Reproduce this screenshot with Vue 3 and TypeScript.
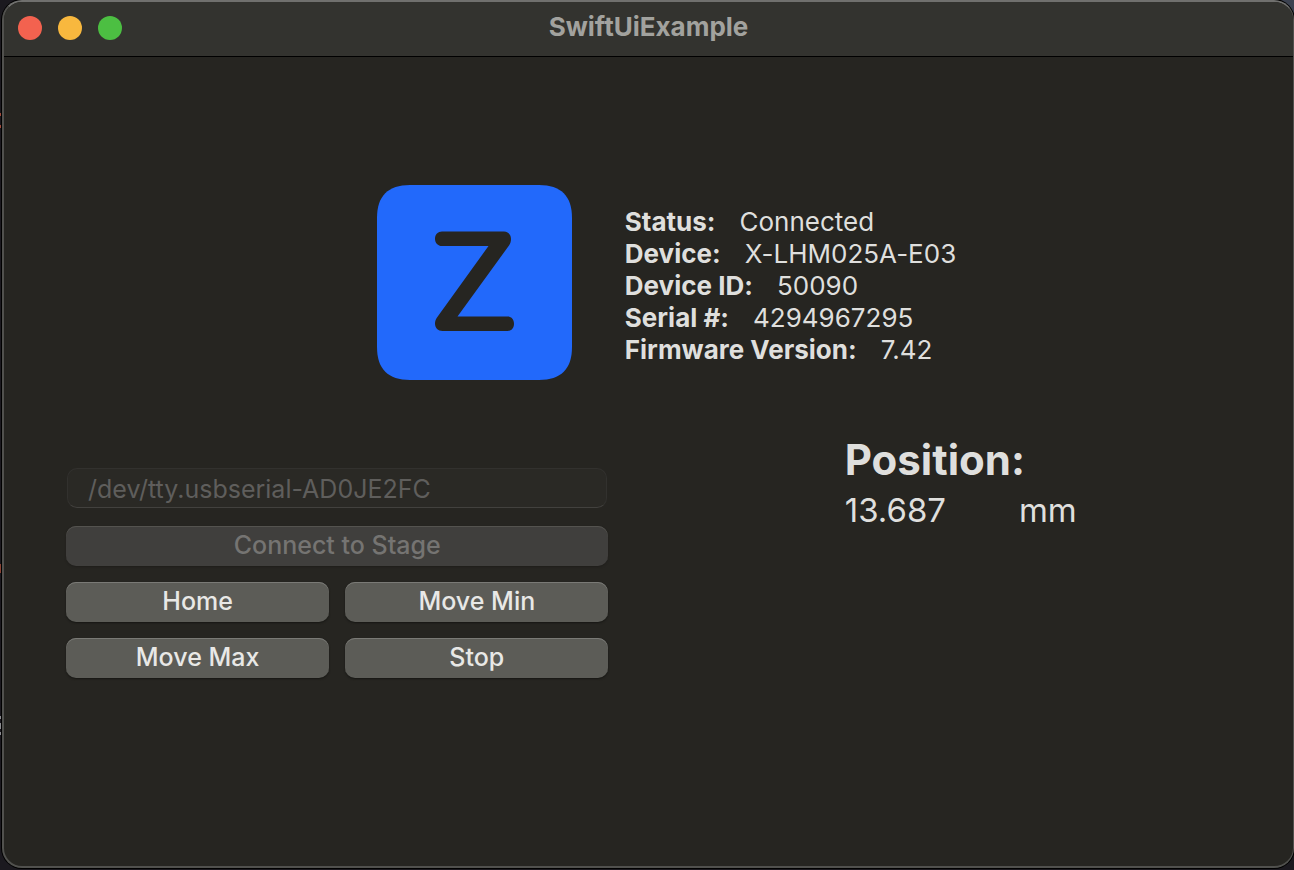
<script setup lang="ts">
import { ref } from 'vue'

interface Detail {
  label: string
  value: string
}

const title = 'SwiftUiExample'
const port = ref('/dev/tty.usbserial-AD0JE2FC')
const position = ref('13.687')
const connected = ref(true)

const details: Detail[] = [
  { label: 'Status:', value: 'Connected' },
  { label: 'Device:', value: 'X-LHM025A-E03' },
  { label: 'Device ID:', value: '50090' },
  { label: 'Serial #:', value: '4294967295' },
  { label: 'Firmware Version:', value: '7.42' },
]

const commands: string[] = ['Home', 'Move Min', 'Move Max', 'Stop']
</script>

<template>
  <div class="desktop">
    <div class="window">
      <header class="titlebar">
        <div class="lights">
          <button class="light close" type="button" aria-label="Close"></button>
          <button class="light minimize" type="button" aria-label="Minimize"></button>
          <button class="light expand" type="button" aria-label="Zoom"></button>
        </div>
        <h1 class="title">{{ title }}</h1>
      </header>

      <main class="content">
        <section class="summary">
          <svg class="logo" viewBox="0 0 195 195" aria-hidden="true">
            <path
              fill="#2269fb"
              d="M33 0H162C184 0 195 11 195 33V162C195 184 184 195 162 195H33C11 195 0 184 0 162V33C0 11 11 0 33 0Z"
            />
            <path
              fill="#262521"
              d="M65 46.5H127C131 46.5 134 49.5 134 54C134 56.5 133.4 58.5 132 60.5L80.5 131.5H130.5C134.5 131.5 137 134.5 137 138.7C137 143 134.5 146 130.5 146H65.5C61 146 58 143 58 138.5C58 136.5 58.6 134.5 60 132.5L111.5 61H65C61 61 58 58 58 53.7C58 49.5 61 46.5 65 46.5Z"
            />
          </svg>
          <dl class="details">
            <div v-for="item in details" :key="item.label" class="detail">
              <dt>{{ item.label }}</dt>
              <dd>{{ item.value }}</dd>
            </div>
          </dl>
        </section>

        <section class="stage">
          <form class="controls" @submit.prevent>
            <input v-model="port" class="port" type="text" aria-label="Serial port" :disabled="connected" />
            <button class="push connect" type="button" :disabled="connected">Connect to Stage</button>
            <button v-for="name in commands" :key="name" class="push" type="button">{{ name }}</button>
          </form>
          <div class="position">
            <h2>Position:</h2>
            <p class="reading">
              <span>{{ position }}</span>
              <span>mm</span>
            </p>
          </div>
        </section>
      </main>
    </div>
  </div>
</template>

<style>
html,
body {
  margin: 0;
  background: #08080a;
}
</style>

<style scoped>
.desktop {
  box-sizing: border-box;
  min-height: 100vh;
  padding: 0 0 2px 2px;
  display: flex;
  background:
    linear-gradient(#a04a3a, #a04a3a) 0 113px / 1px 3px no-repeat,
    linear-gradient(#a04a3a, #a04a3a) 0 125px / 1px 3px no-repeat,
    linear-gradient(#8a4334, #8a4334) 0 564px / 1px 9px no-repeat,
    linear-gradient(#8c8c90, #8c8c90) 0 716px / 1px 3px no-repeat,
    linear-gradient(#8c8c90, #8c8c90) 0 723px / 1px 6px no-repeat,
    linear-gradient(#8c8c90, #8c8c90) 0 732px / 1px 3px no-repeat,
    linear-gradient(#3c4250, #3c4250) 100% 0 / 20px 20px no-repeat,
    #1b191f;
  font-family: Inter, 'Liberation Sans', sans-serif;
  font-feature-settings: 'calt' 0;
  color: #dfdfdd;
}

.window {
  box-sizing: border-box;
  flex: 1;
  display: flex;
  flex-direction: column;
  border: 2px solid #51514e;
  border-top-color: #70706e;
  border-right-width: 1px;
  border-radius: 20px;
  overflow: hidden;
  background: #262521;
  box-shadow: 0 0 0 1px #000;
}

.titlebar {
  display: grid;
  grid-template-columns: 1fr auto 1fr;
  align-items: center;
  height: 55px;
  box-sizing: border-box;
  padding: 0 14px 4px;
  border-bottom: 1px solid #000;
  background: #33332f;
}

.lights {
  display: flex;
  gap: 16px;
  padding-top: 2px;
}

.light {
  width: 24px;
  height: 24px;
  padding: 0;
  border: 0;
  border-radius: 50%;
}

.close {
  background: #f3624f;
}

.minimize {
  background: #f8b83e;
}

.expand {
  background: #4cbf42;
}

.title {
  margin: 0;
  font-size: 26px;
  line-height: 32px;
  font-weight: 700;
  color: #a2a29e;
}

.content {
  padding-top: 128px;
}

.summary {
  display: flex;
  justify-content: center;
  gap: 53px;
  padding-left: 36px;
}

.logo {
  width: 195px;
  height: 195px;
}

.details {
  margin: 0;
  padding-top: 21px;
}

.detail {
  display: flex;
  gap: 24px;
  font-size: 26px;
  line-height: 32px;
}

.detail dt {
  font-weight: 700;
}

.detail dd {
  margin: 0;
}

.stage {
  display: grid;
  grid-template-columns: 542fr 664fr;
  gap: 20px;
  padding: 56px 0 0 62px;
}

.controls {
  display: grid;
  grid-template-columns: 1fr 1fr;
  gap: 16px;
  align-content: start;
  padding-top: 32px;
}

.port {
  grid-column: 1 / -1;
  box-sizing: border-box;
  min-width: 0;
  height: 40px;
  margin: 0 1px 2px;
  padding: 2px 20px 0;
  border: 1px solid #32312e;
  border-bottom-color: #42413e;
  border-radius: 10px;
  background: #2a2925;
  color: #5f5e5c;
  font: 400 25px/32px Inter, 'Liberation Sans', sans-serif;
}

.push {
  box-sizing: border-box;
  height: 40px;
  padding: 0 0 2px;
  border: 0;
  border-radius: 10px;
  background: #5c5c57;
  box-shadow: inset 0 1px 0 #7a7a76, 0 1px 2px #161613;
  color: #e8e8e6;
  font: 500 25px/32px Inter, 'Liberation Sans', sans-serif;
}

.connect {
  grid-column: 1 / -1;
  background: #403f3d;
  box-shadow: inset 0 1px 0 #54534f, 0 1px 2px #1f1e1b;
  color: #757472;
}

.position {
  justify-self: center;
  width: 232px;
}

.position h2 {
  margin: 0;
  font-size: 42px;
  line-height: 48px;
  font-weight: 700;
}

.reading {
  display: flex;
  justify-content: space-between;
  margin: 0;
  font-size: 33px;
  line-height: 52px;
}
</style>
